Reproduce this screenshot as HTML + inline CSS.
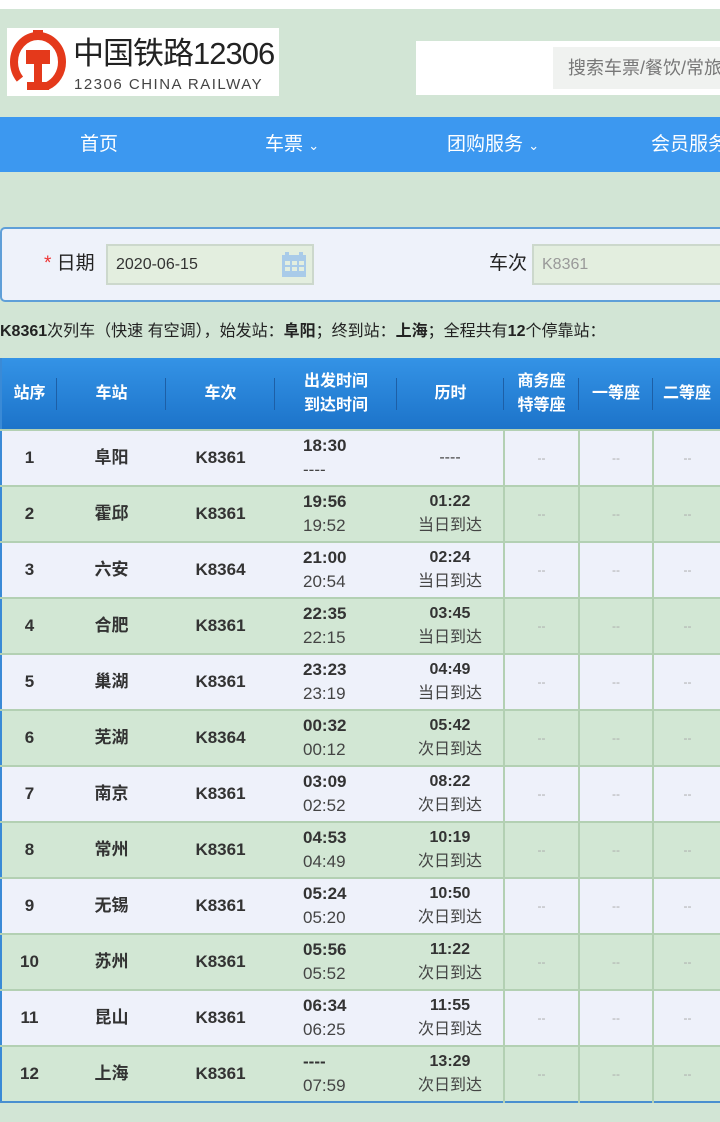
<!DOCTYPE html>
<html><head><meta charset="utf-8"><style>
*{margin:0;padding:0;box-sizing:border-box}
body{width:720px;height:1122px;overflow:hidden;background:#d2e5d5;font-family:"Liberation Sans","Noto Sans CJK SC",sans-serif;position:relative;color:#333}
.a{position:absolute}
table{border-collapse:collapse;table-layout:fixed}
th{color:#fff;font-weight:bold;font-size:16px;line-height:24px;height:72px;position:relative}
td{height:56px;text-align:center;font-size:16px;line-height:24px;color:#333;vertical-align:middle;padding:0}
tr.o td{background:#eef1fa}
tr.e td{background:#d2e7d4}
td{border-top:2px solid #b3d0b3}
td.s{border-left:2px solid #b3d0b3;color:#aaa;font-size:12px}
td.b{font-weight:bold;font-size:17px;line-height:24px}
td.b span{display:inline-block;line-height:24px;height:24px;vertical-align:middle}
.t1{font-weight:bold;font-size:17px;line-height:24px;height:24px;display:block;text-align:left;padding-left:28px}
.t2{font-size:17px;line-height:24px;height:24px;display:block;text-align:left;padding-left:28px;color:#444}
.d1{font-weight:bold;font-size:16px;line-height:24px;height:24px;display:block}
.d2{font-size:16px;line-height:24px;height:24px;display:block;color:#444;overflow:hidden}
.sep{position:absolute;right:0;top:20px;height:32px;border-right:1px solid #1d5fa6}
</style></head><body>
<div class="a" style="left:0;top:0;width:720px;height:9px;background:#fff"></div>
<div class="a" style="left:7px;top:28px;width:272px;height:68px;background:#fff">
<svg class="a" style="left:0;top:0" width="62" height="68" viewBox="0 0 62 68">
<ellipse cx="31" cy="34" rx="24" ry="26" fill="none" stroke="#e4391b" stroke-width="8" stroke-dasharray="150 30" stroke-dashoffset="-60"/>
<rect x="26" y="2" width="10" height="8" fill="#e4391b"/>
<path d="M19 22 H43 V36 H35 V54 H42 V62 H20 V54 H27 V36 H19Z" fill="#e4391b"/>
</svg>
<div class="a" style="left:66px;top:8px;font-size:31px;line-height:36px;color:#222;letter-spacing:-1px;white-space:nowrap">中国铁路12306</div>
<div class="a" style="left:67px;top:48px;font-size:15px;line-height:18px;color:#444;letter-spacing:1.5px;white-space:nowrap">12306 CHINA RAILWAY</div>
</div>
<div class="a" style="left:416px;top:41px;width:304px;height:54px;background:#fff"></div>
<div class="a" style="left:553px;top:47px;width:167px;height:42px;background:#f0f2f0;font-size:18px;line-height:42px;color:#777;padding-left:15px;white-space:nowrap;overflow:hidden">搜索车票/餐饮/常旅客</div>
<div class="a" style="left:0;top:117px;width:720px;height:55px;background:#3c98f0;color:#fff;font-size:19px;line-height:55px;white-space:nowrap">
<span class="a" style="left:80px">首页</span>
<span class="a" style="left:265px">车票 <span style="font-size:13px">&#8964;</span></span>
<span class="a" style="left:447px">团购服务 <span style="font-size:13px">&#8964;</span></span>
<span class="a" style="left:651px">会员服务</span>
</div>
<div class="a" style="left:0;top:227px;width:730px;height:75px;background:#eef2fa;border:2px solid #5f9fd8;border-radius:5px"></div>
<div class="a" style="left:44px;top:252px;font-size:19px;line-height:24px;color:#222"><span style="color:#e33">*</span> 日期</div>
<div class="a" style="left:106px;top:244px;width:208px;height:41px;background:#e3eedf;border:2px solid #ccd8cc;font-size:16px;line-height:37px;padding-left:8px;color:#333">2020-06-15</div>
<svg class="a" style="left:280px;top:250px" width="28" height="28" viewBox="0 0 28 28"><rect x="2" y="5" width="24" height="22" fill="#a9cbe9"/><rect x="5" y="2" width="4" height="5" fill="#a9cbe9"/><rect x="19" y="2" width="4" height="5" fill="#a9cbe9"/><g fill="#e3eedf"><rect x="5" y="11" width="5" height="4"/><rect x="12" y="11" width="5" height="4"/><rect x="19" y="11" width="5" height="4"/><rect x="5" y="17" width="5" height="4"/><rect x="12" y="17" width="5" height="4"/><rect x="19" y="17" width="5" height="4"/></g></svg>
<div class="a" style="left:489px;top:252px;font-size:19px;line-height:24px;color:#222">车次</div>
<div class="a" style="left:532px;top:244px;width:200px;height:41px;background:#e3eedf;border:2px solid #ccd8cc;font-size:16px;line-height:37px;padding-left:8px;color:#999">K8361</div>
<div class="a" style="left:0;top:321px;font-size:16px;line-height:22px;color:#222;white-space:nowrap"><b>K8361</b>次列车（快速 有空调），始发站：<b>阜阳</b>；终到站：<b>上海</b>；全程共有<b>12</b>个停靠站：</div>
<table class="a" style="left:0;top:358px;width:720px;border-left:2px solid #3a8ad6;border-bottom:2px solid #4a8fd0">
<colgroup><col style="width:56px"><col style="width:109px"><col style="width:109px"><col style="width:122px"><col style="width:107px"><col style="width:75px"><col style="width:74px"><col style="width:68px"></colgroup>
<tr style="background:linear-gradient(#3493e6,#1c73c9)">
<th>站序<i class="sep"></i></th><th>车站<i class="sep"></i></th><th>车次<i class="sep"></i></th><th>出发时间<br>到达时间<i class="sep"></i></th><th>历时<i class="sep"></i></th><th>商务座<br>特等座<i class="sep"></i></th><th>一等座<i class="sep"></i></th><th>二等座</th></tr>
<tr class="o"><td class="b"><span>1</span></td><td class="b"><span>阜阳</span></td><td class="b"><span>K8361</span></td><td><span class="t1">18:30</span><span class="t2">----</span></td><td><span class="d2">----</span></td><td class="s">--</td><td class="s">--</td><td class="s">--</td></tr>
<tr class="e"><td class="b"><span>2</span></td><td class="b"><span>霍邱</span></td><td class="b"><span>K8361</span></td><td><span class="t1">19:56</span><span class="t2">19:52</span></td><td><span class="d1">01:22</span><span class="d2">当日到达</span></td><td class="s">--</td><td class="s">--</td><td class="s">--</td></tr>
<tr class="o"><td class="b"><span>3</span></td><td class="b"><span>六安</span></td><td class="b"><span>K8364</span></td><td><span class="t1">21:00</span><span class="t2">20:54</span></td><td><span class="d1">02:24</span><span class="d2">当日到达</span></td><td class="s">--</td><td class="s">--</td><td class="s">--</td></tr>
<tr class="e"><td class="b"><span>4</span></td><td class="b"><span>合肥</span></td><td class="b"><span>K8361</span></td><td><span class="t1">22:35</span><span class="t2">22:15</span></td><td><span class="d1">03:45</span><span class="d2">当日到达</span></td><td class="s">--</td><td class="s">--</td><td class="s">--</td></tr>
<tr class="o"><td class="b"><span>5</span></td><td class="b"><span>巢湖</span></td><td class="b"><span>K8361</span></td><td><span class="t1">23:23</span><span class="t2">23:19</span></td><td><span class="d1">04:49</span><span class="d2">当日到达</span></td><td class="s">--</td><td class="s">--</td><td class="s">--</td></tr>
<tr class="e"><td class="b"><span>6</span></td><td class="b"><span>芜湖</span></td><td class="b"><span>K8364</span></td><td><span class="t1">00:32</span><span class="t2">00:12</span></td><td><span class="d1">05:42</span><span class="d2">次日到达</span></td><td class="s">--</td><td class="s">--</td><td class="s">--</td></tr>
<tr class="o"><td class="b"><span>7</span></td><td class="b"><span>南京</span></td><td class="b"><span>K8361</span></td><td><span class="t1">03:09</span><span class="t2">02:52</span></td><td><span class="d1">08:22</span><span class="d2">次日到达</span></td><td class="s">--</td><td class="s">--</td><td class="s">--</td></tr>
<tr class="e"><td class="b"><span>8</span></td><td class="b"><span>常州</span></td><td class="b"><span>K8361</span></td><td><span class="t1">04:53</span><span class="t2">04:49</span></td><td><span class="d1">10:19</span><span class="d2">次日到达</span></td><td class="s">--</td><td class="s">--</td><td class="s">--</td></tr>
<tr class="o"><td class="b"><span>9</span></td><td class="b"><span>无锡</span></td><td class="b"><span>K8361</span></td><td><span class="t1">05:24</span><span class="t2">05:20</span></td><td><span class="d1">10:50</span><span class="d2">次日到达</span></td><td class="s">--</td><td class="s">--</td><td class="s">--</td></tr>
<tr class="e"><td class="b"><span>10</span></td><td class="b"><span>苏州</span></td><td class="b"><span>K8361</span></td><td><span class="t1">05:56</span><span class="t2">05:52</span></td><td><span class="d1">11:22</span><span class="d2">次日到达</span></td><td class="s">--</td><td class="s">--</td><td class="s">--</td></tr>
<tr class="o"><td class="b"><span>11</span></td><td class="b"><span>昆山</span></td><td class="b"><span>K8361</span></td><td><span class="t1">06:34</span><span class="t2">06:25</span></td><td><span class="d1">11:55</span><span class="d2">次日到达</span></td><td class="s">--</td><td class="s">--</td><td class="s">--</td></tr>
<tr class="e"><td class="b"><span>12</span></td><td class="b"><span>上海</span></td><td class="b"><span>K8361</span></td><td><span class="t1">----</span><span class="t2">07:59</span></td><td><span class="d1">13:29</span><span class="d2">次日到达</span></td><td class="s">--</td><td class="s">--</td><td class="s">--</td></tr>
</table>
</body></html>
